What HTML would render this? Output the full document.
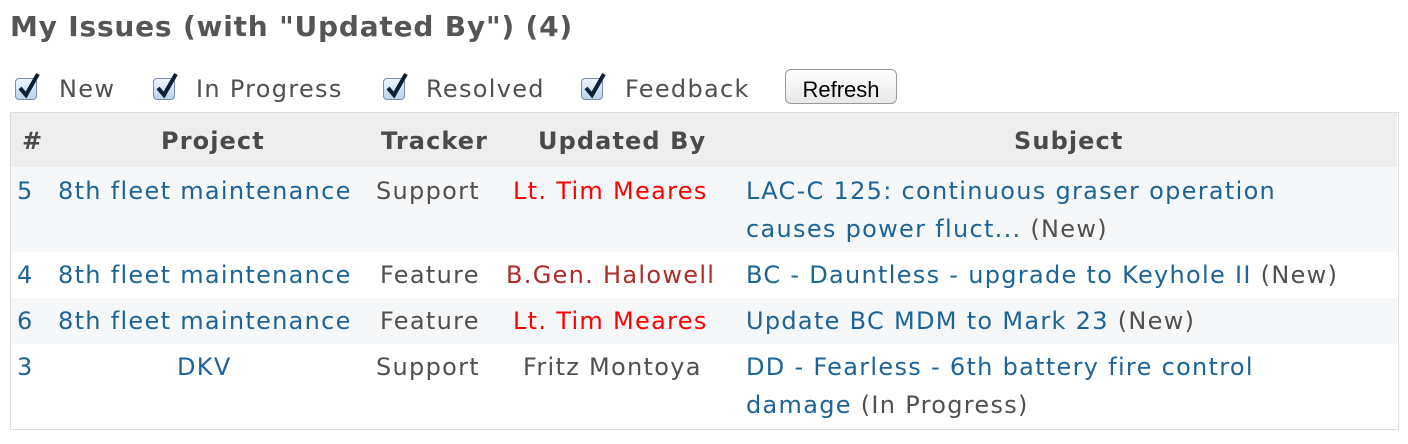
<!DOCTYPE html>
<html><head><style>
body{margin:0;width:1408px;height:444px;background:#fff;font-family:"DejaVu Sans","Liberation Sans",sans-serif;color:#505050;position:relative;overflow:hidden}
.a{position:absolute;white-space:nowrap;font-size:24px;line-height:28px;letter-spacing:1.3px}
.l{color:#1d6496}
.r{color:#f00}
.dr{color:#b02a2a}
.h{font-weight:bold;color:#4a4a4a;letter-spacing:1.1px}
.cb{position:absolute;top:78px;width:20px;height:20px;border:1px solid #7a8ea8;border-radius:4px;background:linear-gradient(#eef5fd,#b9d3ee)}
.cb svg{position:absolute;left:1px;top:-8px}
.bg{position:absolute;left:11px;width:1386px}
</style></head><body>
<div class="a" style="left:10px;top:10px;font-size:28px;line-height:34px;color:#555;font-weight:bold;letter-spacing:0.8px">My Issues (with "Updated By") (4)</div>

<div class="cb" style="left:15px"><svg width="26" height="28" viewBox="0 0 26 28"><path d="M3 17 L9 24 L21 3" stroke="#0d2038" stroke-width="4" fill="none"/></svg></div>
<div class="a" style="left:59px;top:75px">New</div>
<div class="cb" style="left:153px"><svg width="26" height="28" viewBox="0 0 26 28"><path d="M3 17 L9 24 L21 3" stroke="#0d2038" stroke-width="4" fill="none"/></svg></div>
<div class="a" style="left:196px;top:75px">In Progress</div>
<div class="cb" style="left:383px"><svg width="26" height="28" viewBox="0 0 26 28"><path d="M3 17 L9 24 L21 3" stroke="#0d2038" stroke-width="4" fill="none"/></svg></div>
<div class="a" style="left:426px;top:75px">Resolved</div>
<div class="cb" style="left:581px"><svg width="26" height="28" viewBox="0 0 26 28"><path d="M3 17 L9 24 L21 3" stroke="#0d2038" stroke-width="4" fill="none"/></svg></div>
<div class="a" style="left:625px;top:75px">Feedback</div>
<div style="position:absolute;left:785px;top:69px;width:112px;height:35px;border:1px solid #999;border-radius:6px;background:linear-gradient(#fff,#e8e8e8);box-sizing:border-box;font-family:'Liberation Sans',sans-serif;font-size:22px;color:#000;text-align:center;line-height:40px">Refresh</div>

<div style="position:absolute;left:10px;top:112px;width:1387px;height:316px;border:1px solid #ddd"></div>
<div class="bg" style="top:113px;height:54px;background:#eee"></div>
<div class="bg" style="top:167px;height:85px;background:#f6f7f8"></div>
<div class="bg" style="top:298px;height:46px;background:#f6f7f8"></div>

<div class="a h" style="left:22px;top:127px">#</div>
<div class="a h" style="left:161px;top:127px">Project</div>
<div class="a h" style="left:381px;top:127px">Tracker</div>
<div class="a h" style="left:538px;top:127px">Updated By</div>
<div class="a h" style="left:1014px;top:127px">Subject</div>

<div class="a l" style="left:17px;top:177px">5</div>
<div class="a l" style="left:58px;top:177px">8th fleet maintenance</div>
<div class="a" style="left:376px;top:177px">Support</div>
<div class="a r" style="left:513px;top:177px">Lt. Tim Meares</div>
<div class="a" style="left:746px;top:177px"><span class="l">LAC-C 125: continuous graser operation</span></div>
<div class="a" style="left:746px;top:215px"><span class="l">causes power fluct...</span> (New)</div>

<div class="a l" style="left:17px;top:261px">4</div>
<div class="a l" style="left:58px;top:261px">8th fleet maintenance</div>
<div class="a" style="left:380px;top:261px">Feature</div>
<div class="a dr" style="left:506px;top:261px">B.Gen. Halowell</div>
<div class="a" style="left:746px;top:261px"><span class="l">BC - Dauntless - upgrade to Keyhole II</span> (New)</div>

<div class="a l" style="left:17px;top:307px">6</div>
<div class="a l" style="left:58px;top:307px">8th fleet maintenance</div>
<div class="a" style="left:380px;top:307px">Feature</div>
<div class="a r" style="left:513px;top:307px">Lt. Tim Meares</div>
<div class="a" style="left:746px;top:307px"><span class="l">Update BC MDM to Mark 23</span> (New)</div>

<div class="a l" style="left:17px;top:353px">3</div>
<div class="a l" style="left:177px;top:353px">DKV</div>
<div class="a" style="left:376px;top:353px">Support</div>
<div class="a" style="left:523px;top:353px">Fritz Montoya</div>
<div class="a" style="left:746px;top:353px"><span class="l">DD - Fearless - 6th battery fire control</span></div>
<div class="a" style="left:746px;top:391px"><span class="l">damage</span> (In Progress)</div>
</body></html>
